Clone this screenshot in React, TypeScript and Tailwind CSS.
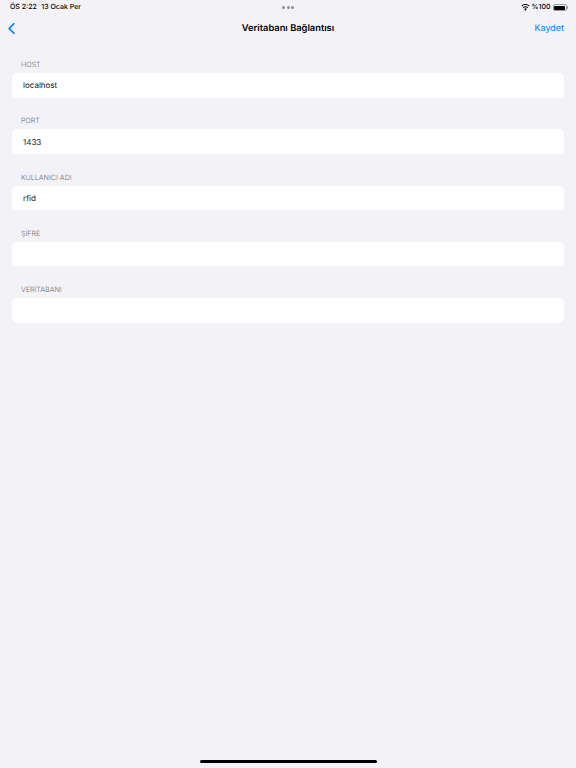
import { ChevronLeft } from "lucide-react";

const fields = [
  { label: "HOST", value: "localhost" },
  { label: "PORT", value: "1433" },
  { label: "KULLANICI ADI", value: "rfid" },
  { label: "ŞİFRE", value: "" },
  { label: "VERİTABANI", value: "" },
];

function WifiIcon() {
  return (
    <svg width="9" height="7" viewBox="0 0 18 14" fill="#000">
      <path d="M9 2.2c2.6 0 5 1 6.8 2.7l1.3-1.4C14.9 1.4 12.1.2 9 .2S3.1 1.4.9 3.5l1.3 1.4C4 3.2 6.4 2.2 9 2.2z" />
      <path d="M9 6.4c1.5 0 2.9.6 3.9 1.5l1.4-1.4C12.9 5.200 11 4.400 9 4.400s-3.900.8-5.300 2.100l1.400 1.400c1-.9 2.400-1.500 3.900-1.500z" />
      <path d="M9 8.600c-1 0-1.900.4-2.600 1L9 13.800l2.600-4.200c-.7-.6-1.600-1-2.600-1z" />
    </svg>
  );
}

function BatteryIcon() {
  return (
    <div className="flex items-center">
      <div className="w-[14px] h-[7px] rounded-[2px] border border-[#9a9a9e] p-[0.5px]">
        <div className="w-full h-full rounded-[1px] bg-black" />
      </div>
      <div className="w-[1px] h-[3px] bg-[#9a9a9e] rounded-r-sm ml-[0.5px]" />
    </div>
  );
}

export default function App() {
  return (
    <div className="relative h-[768px] w-[576px] overflow-hidden bg-[#f2f2f7] font-['Inter',sans-serif] text-black antialiased [text-rendering:geometricPrecision]">
      {/* status bar */}
      <div className="flex h-[15px] items-center justify-between pl-[10px] pr-[8px] text-[7px] font-medium">
        <div className="flex gap-[4.5px]">
          <span>ÖS 2:22</span>
          <span>13 Ocak Per</span>
        </div>
        <div className="flex items-center gap-[2px]">
          <WifiIcon />
          <span>%100</span>
          <BatteryIcon />
        </div>
      </div>

      {/* nav bar */}
      <div className="relative flex h-[27px] items-center justify-between pl-[2px] pr-[12px]">
        <ChevronLeft size={19} strokeWidth={2.2} className="text-[#007aff] -mt-[1px]" />
        <span className="absolute inset-x-0 text-center text-[9.3px] font-semibold">Veritabanı Bağlantısı</span>
        <span className="text-[9px] text-[#007aff]">Kaydet</span>
      </div>

      {/* form */}
      <div className="flex flex-col gap-[15.75px] px-[12px] pt-[15px]">
        {fields.map((f) => (
          <div key={f.label}>
            <div className="flex h-[16px] items-center pl-[9px] pt-[1px] text-[7.1px] font-light text-[#6e6e74]">{f.label}</div>
            <div className="flex h-[24.5px] items-center rounded-[5px] bg-white pl-[11px] text-[8px] text-[#111]">{f.value}</div>
          </div>
        ))}
      </div>

      {/* home indicator */}
      <div className="absolute bottom-[5px] left-[199.5px] h-[3px] w-[177px] rounded-full bg-black" />
      <div className="absolute left-[282px] top-[6px] flex gap-[1.5px]">
        <span className="h-[3px] w-[3px] rounded-full bg-[#8e8e93]" />
        <span className="h-[3px] w-[3px] rounded-full bg-[#8e8e93]" />
        <span className="h-[3px] w-[3px] rounded-full bg-[#8e8e93]" />
      </div>
    </div>
  );
}
